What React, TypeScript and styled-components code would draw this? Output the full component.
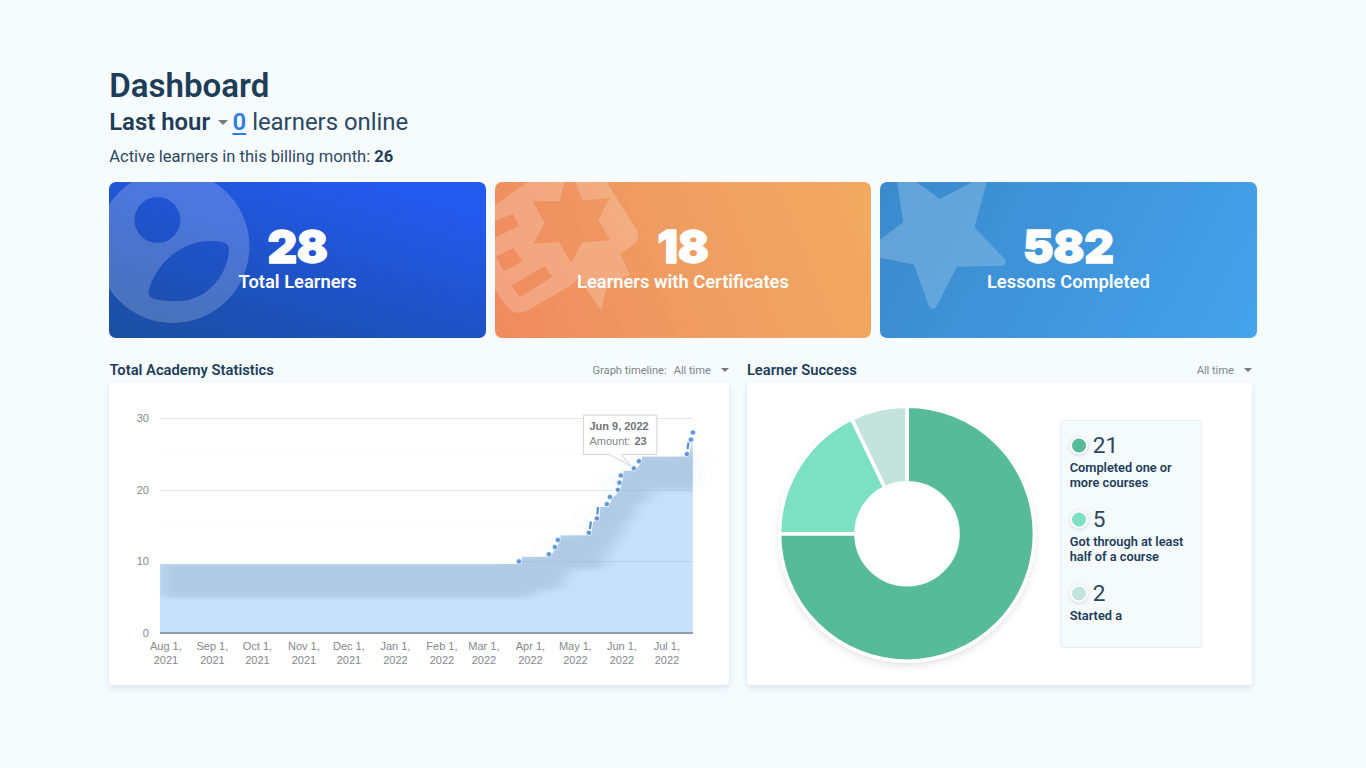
import React from "react";
import styled, { createGlobalStyle } from "styled-components";

const Global = createGlobalStyle`
  * { box-sizing: border-box; }
  body { margin: 0; background: #f5fafd; font-family: Roboto, "Liberation Sans", sans-serif; color: #1d3d58; }
`;

const Page = styled.main`
  width: 1366px;
  height: 768px;
  padding: 56px 78px 70px 76px;
  overflow: hidden;
`;

const Board = styled.div`
  height: 642px;
  padding: 11px 31px 0 33.4px;
  background: #f6fbfe;
`;

const Title = styled.h1`
  margin: 0 0 0 -0.2px;
  font-size: 33.1px;
  line-height: 37px;
  font-weight: 600;
`;

const Online = styled.div`
  display: flex;
  align-items: center;
  height: 32px;
  margin: 2px 0 0 -0.2px;
  font-size: 23.9px;
  color: #2a4861;
  b { font-weight: 650; color: #1d3d58; }
`;

const OnlineLink = styled.a`
  margin: 0 6px 0 4.5px;
  color: #2f7de1;
  font-weight: 600;
  text-decoration: underline;
  text-underline-offset: 3px;
`;

const Billing = styled.p`
  margin: 8.6px 0 0 -0.2px;
  font-size: 16.55px;
  line-height: 20px;
  color: #2d4a63;
  b { font-weight: 700; color: #1d3d58; }
`;

const Cards = styled.section`
  display: grid;
  grid-template-columns: repeat(3, 1fr);
  gap: 9px;
  width: 1147.2px;
  margin-top: 15.9px;
`;

const Card = styled.article<{ $bg: string }>`
  display: grid;
  height: 155.5px;
  border-radius: 7px;
  overflow: hidden;
  background: ${(p) => p.$bg};
  color: #fff;
  > * { grid-area: 1 / 1; }
`;

const Art = styled.svg`
  width: 160px;
  height: 155px;
  display: block;
`;

const CardText = styled.div`
  display: flex;
  flex-direction: column;
  align-items: center;
  padding-top: 44.4px;
  z-index: 1;
`;

const Big = styled.div`
  font: 900 46px/39px Inter, Roboto, sans-serif;
  letter-spacing: -0.3px;
  margin-bottom: 5px;
  -webkit-text-stroke: 1.3px #fff;
`;

const Label = styled.div`
  font-size: 18.35px;
  line-height: 22px;
  font-weight: 600;
`;

const Panels = styled.section`
  display: grid;
  grid-template-columns: 619.5px 505px;
  gap: 18px;
  margin-top: 20.5px;
`;

const PanelHead = styled.header`
  display: flex;
  align-items: center;
  height: 24px;
`;

const PanelTitle = styled.h2`
  margin: 0 auto 0 0;
  font-size: 14.75px;
  font-weight: 600;
`;

const Filter = styled.span`
  color: #80868c;
  font-size: 11.2px;
  letter-spacing: -0.05px;
  margin-left: 7px;
`;

const Caret = styled.i<{ $w?: number; $gap: string }>`
  margin-left: ${(p) => p.$gap};
  border: ${(p) => p.$w ?? 4}px solid transparent;
  border-top-color: #737a80;
  border-bottom: 0;
`;

const PanelBody = styled.div`
  display: flex;
  height: 303px;
  border-radius: 4px;
  background: #fff;
  box-shadow: 0 3px 6px rgba(60, 75, 110, 0.14);
`;

const Chart = styled.svg`
  display: block;
  font-family: "Liberation Sans", Arial, sans-serif;
  font-size: 11px;
  fill: #85888c;
`;

const Legend = styled.ul`
  width: 142px;
  height: 228px;
  margin: 38px 0 0 12.8px;
  padding: 10.5px 0 0 9px;
  list-style: none;
  background: #f5fafd;
  border: 1px solid #e8eff5;
  border-radius: 3px;
`;

const LegendItem = styled.li`
  height: 74px;
`;

const LegendValue = styled.div`
  display: flex;
  align-items: center;
  gap: 5px;
  height: 28px;
  font-size: 22.6px;
  color: #2a4861;
`;

const Dot = styled.i<{ $c: string }>`
  width: 18px;
  height: 18px;
  border-radius: 50%;
  border: 2px solid #fff;
  background: ${(p) => p.$c};
  box-shadow: 0 1px 4px rgba(40, 60, 90, 0.18);
  transform: translateY(-0.5px);
`;

const LegendText = styled.div`
  width: 128px;
  font-size: 12.8px;
  line-height: 15px;
  font-weight: 600;
`;

const months: [number, string, string][] = [
  [166, "Aug 1,", "2021"], [212.5, "Sep 1,", "2021"], [257.5, "Oct 1,", "2021"],
  [304, "Nov 1,", "2021"], [349, "Dec 1,", "2021"], [395.5, "Jan 1,", "2022"],
  [442, "Feb 1,", "2022"], [484, "Mar 1,", "2022"], [530.5, "Apr 1,", "2022"],
  [575.5, "May 1,", "2022"], [622, "Jun 1,", "2022"], [667, "Jul 1,", "2022"],
];

const yOf = (v: number) => 633 - v * 7.16;

const dots: [number, number][] = [
  [519, 10], [549, 11], [555, 12], [558, 13], [589, 14], [597, 16], [607, 18], [610, 19],
  [618, 20], [619.5, 21], [621, 22], [634, 23], [639, 24], [687, 25], [691, 27], [693, 28],
];

const line =
  "160,561.4 519,561.4 520,554.2 549,554.2 558,540 558,532.8 589,532.8 591,520 597,518 598,504.5 607,504.5 610,497 618,489.8 621,475.5 621,468.3 634,468.3 639,461.2 640,454 687,454 688,446 691,439.7 693,432.5";

const Statistics = () => (
  <Chart width="619.5" height="303" viewBox="109.1 382 619.5 303">
    <defs>
      <clipPath id="area"><polygon points={`${line} 693,633 160,633`} /></clipPath>
      <filter id="soft" filterUnits="userSpaceOnUse" x="120" y="400" width="620" height="260">
        <feGaussianBlur stdDeviation="8 2.6" />
      </filter>
    </defs>
    {[15, 5, 25].map((v) => <path key={v} d={`M160 ${yOf(v)}H693`} stroke="#fafafb" />)}
    {[10, 20, 30].map((v) => <path key={v} d={`M160 ${Math.round(yOf(v)) + 0.5}H693`} stroke="#e4e6e8" />)}
    <polyline points={line} transform="translate(0 20)" fill="none" stroke="#8f9bb0" strokeOpacity=".05" strokeWidth="30" filter="url(#soft)" />
    <g clipPath="url(#area)">
      <rect x="160" y="420" width="533" height="213" fill="#c8e1fa" />
      <polyline points={line} transform="translate(0 19)" fill="none" stroke="#7795b2" strokeOpacity=".29" strokeWidth="34" filter="url(#soft)" />
      {[10, 20].map((v) => <path key={v} d={`M500 ${Math.round(yOf(v)) + 0.5}H693`} stroke="#9fb6cd" strokeOpacity=".4" />)}
    </g>
    <polyline points={line} fill="none" stroke="#fff" strokeWidth="5" />
    <path d="M160 633H693" stroke="#8f9baa" strokeWidth="1.8" />
    {dots.map(([x, v]) => <circle key={v} cx={x} cy={yOf(v)} r="2.6" fill="#5c97d6" stroke="#e8f2fc" strokeWidth="0.8" />)}
    <path d="M590 529L591 521.5M597.5 514.5L598 507M687.6 449L688.6 442.5" stroke="#4f8fd6" strokeWidth="2.2" />
    <path d="M583.5 415H657V454.5H621.5L631 466L609.5 454.5H583.5Z" fill="#fff" stroke="#d3d3d8" />
    <text x="589.5" y="430" fontWeight="700" fill="#717479">Jun 9, 2022</text>
    <text x="589.5" y="444.5">Amount: <tspan x="634.5" fontWeight="700" fill="#717479">23</tspan></text>
    {[0, 10, 20, 30].map((v) => <text key={v} x="149" y={yOf(v) + 4} textAnchor="end">{v}</text>)}
    {months.map(([x, m, y]) => (
      <g key={m} textAnchor="middle"><text x={x} y="649.5">{m}</text><text x={x} y="664">{y}</text></g>
    ))}
  </Chart>
);

const polar = (r: number, deg: number) => {
  const a = ((deg - 90) * Math.PI) / 180;
  return `${907 + r * Math.cos(a)} ${534 + r * Math.sin(a)}`;
};
const slice = (a: number, b: number) =>
  `M${polar(127.5, a)}A127.5 127.5 0 ${b - a > 180 ? 1 : 0} 1 ${polar(127.5, b)}L${polar(51, b)}A51 51 0 ${b - a > 180 ? 1 : 0} 0 ${polar(51, a)}Z`;

const Donut = () => (
  <Chart width="300" height="303" viewBox="747 382.3 300 303">
    <defs>
      <filter id="ring" x="-20%" y="-20%" width="140%" height="140%"><feGaussianBlur stdDeviation="4" /></filter>
    </defs>
    <circle cx="907" cy="538" r="127" fill="#8b7f92" opacity=".3" filter="url(#ring)" />
    <circle cx="907" cy="534" r="129" fill="#fff" />
    <g stroke="#fff" strokeWidth="3.6">
      <path d={slice(0, 270)} fill="#57bb99" />
      <path d={slice(270, 334.3)} fill="#7ce1c3" />
      <path d={slice(334.3, 360)} fill="#c3e4dc" />
    </g>
  </Chart>
);

const App = () => (
  <>
    <Global />
    <Page>
      <Board>
        <Title>Dashboard</Title>
        <Online>
          <b>Last hour</b>
          <Caret $w={5} $gap="8px" />
          <OnlineLink>0</OnlineLink>
          <span>learners online</span>
        </Online>
        <Billing>Active learners in this billing month: <b>26</b></Billing>
        <Cards>
          <Card $bg="linear-gradient(16deg, #1a4e9f 0%, #1e52c4 40%, #2459f0 90%)">
            <Art viewBox="109.1 182 160 155">
              <path fill="#fff" fillOpacity=".2" fillRule="evenodd" d="M96.5 246.5a76.5 76.5 0 1 0 153 0a76.5 76.5 0 1 0-153 0ZM134.5 220a23 23 0 1 1 46 0a23 23 0 1 1-46 0ZM149 290C155 266 180 240 212 241C225 241.5 229.5 243 229 251C227 276 206 301.5 177 301.3C153 301 147 298 149 290Z" />
            </Art>
            <CardText><Big>28</Big><Label>Total Learners</Label></CardText>
          </Card>
          <Card $bg="linear-gradient(68deg, #f08a60 0%, #ef9d62 50%, #f2aa60 100%)">
            <Art viewBox="494.8 182 160 155">
              <path
                fill="#fff"
                fillOpacity=".2"
                fillRule="evenodd"
                d="M490 208.5L523 185Q529 181 536 178H566L559 201.3L532.3 200.7L544.3 223L533.3 243.7L559 242.3L571 263L581.7 242.3L610 240.3L598.3 219.7L609.3 198L582.7 200.7L573 178H604L636 229Q641 238 634 244L620 254L630 275L607 285L601 311L587 290L578 278L573 284L530 309Q517 317 508 308L490 283ZM490 223L512.7 213.7L519 225.7L490 240ZM496 256.3L513.3 248L522.3 261.3L503.3 271.3ZM511 285.7L545 265.7L552 277L520 297Z"
              />
            </Art>
            <CardText><Big>18</Big><Label>Learners with Certificates</Label></CardText>
          </Card>
          <Card $bg="linear-gradient(118deg, #3b8bcc 0%, #3f95db 50%, #45a4ed 100%)">
            <Art viewBox="880.2 182 160 155">
              <path fill="#fff" fillOpacity=".2" d="M896.5 176H909L940 199L984 176H988.5L974.7 227.5L1005 259Q1008.5 265 1001 265.7L957 266.7L937 306Q933 312 929 306L914.3 264.7L876 257V243L903.3 222Z" />
            </Art>
            <CardText><Big>582</Big><Label>Lessons Completed</Label></CardText>
          </Card>
        </Cards>
        <Panels>
          <div>
            <PanelHead>
              <PanelTitle>Total Academy Statistics</PanelTitle>
              <Filter>Graph timeline:</Filter><Filter>All time</Filter>
              <Caret $gap="10px" />
            </PanelHead>
            <PanelBody><Statistics /></PanelBody>
          </div>
          <div>
            <PanelHead>
              <PanelTitle>Learner Success</PanelTitle>
              <Filter>All time</Filter>
              <Caret $gap="10px" />
            </PanelHead>
            <PanelBody>
              <Donut />
              <Legend>
                <LegendItem><LegendValue><Dot $c="#57bb99" />21</LegendValue><LegendText>Completed one or more courses</LegendText></LegendItem>
                <LegendItem><LegendValue><Dot $c="#7ce1c3" />5</LegendValue><LegendText>Got through at least half of a course</LegendText></LegendItem>
                <LegendItem><LegendValue><Dot $c="#c3e4dc" />2</LegendValue><LegendText>Started a</LegendText></LegendItem>
              </Legend>
            </PanelBody>
          </div>
        </Panels>
      </Board>
    </Page>
  </>
);

export default App;
